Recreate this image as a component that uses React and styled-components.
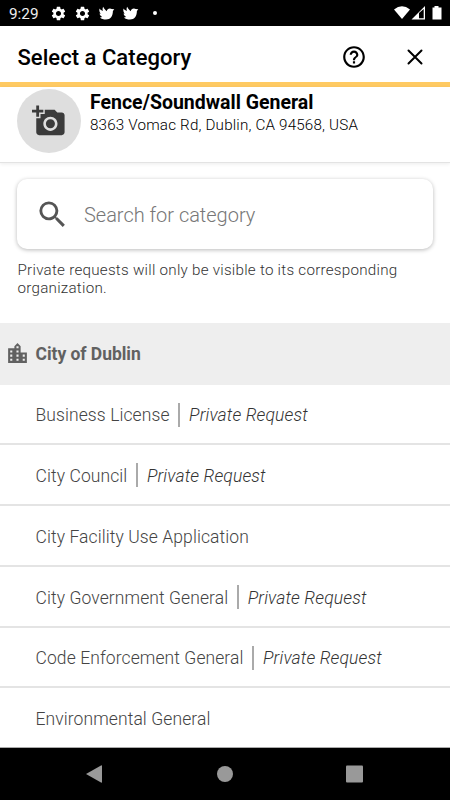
import React from "react";
import styled, { createGlobalStyle } from "styled-components";
import { MdSearch, MdHelpOutline, MdLocationCity, MdAddAPhoto, MdSettings } from "react-icons/md";

const Global = createGlobalStyle`
  * { box-sizing: border-box; }
  body { margin: 0; background: #fff; font-family: Roboto, "Liberation Sans", sans-serif; }
`;
const Screen = styled.div`
  width: 450px; height: 800px; overflow: hidden; background: #fff;
  display: flex; flex-direction: column;
`;
const StatusBar = styled.div`
  height: 26px; flex: none; background: #000; color: #fff;
  display: flex; align-items: center; padding: 0 8px 0 9px;
  svg { display: block; flex: none; }
`;
const Clock = styled.span`
  width: 41px; font-size: 15.3px; line-height: 18px; color: #eee; white-space: nowrap;
  padding-top: 1px;
`;
const Notifications = styled.div`
  display: flex; align-items: center; gap: 7px; flex: 1;
`;
const Dot = styled.i`
  width: 4px; height: 4px; border-radius: 50%; background: #fff; margin-left: 7px;
`;
const TopBar = styled.header`
  height: 61px; flex: none; display: flex; align-items: center;
  padding: 0 22px 0 17.5px; border-bottom: 5px solid #ffca62; color: #000;
`;
const Title = styled.h1`
  margin: 7px 0 0; flex: 1; font-size: 22px; line-height: 28px; font-weight: 500;
  letter-spacing: 0.04px; white-space: nowrap;
`;
const Actions = styled.div`
  display: flex; align-items: center; gap: 36px; margin-top: 6px;
  svg { display: block; }
`;
const Summary = styled.section`
  height: 75.5px; flex: none; display: flex; padding: 2px 18px 0 17px; gap: 9px;
  border-bottom: 1px solid #e3e3e3; box-shadow: 0 1px 4px rgba(0,0,0,.08);
`;
const Avatar = styled.div`
  width: 64px; height: 64px; border-radius: 50%; background: #dedede; color: #3b3b3b;
  display: flex; align-items: center; justify-content: center; flex: none;
  svg { margin-right: 1px; }
`;
const Line = styled.div`
  white-space: nowrap; font-size: ${(p) => p.$size}px; line-height: ${(p) => p.$lh}px;
  font-weight: ${(p) => p.$weight || 300}; letter-spacing: ${(p) => p.$track || 0}px;
  color: ${(p) => p.$color || "#000"};
`;
const SearchBox = styled.div`
  height: 70px; flex: none; margin: 16.5px 17px 0; border-radius: 10px; background: #fff;
  box-shadow: 0 1px 4px rgba(0,0,0,.28);
  display: flex; align-items: center; padding-left: 18px; gap: 14px; color: #555;
`;
const Placeholder = styled(Line)`
  padding-top: 2px;
`;
const Hint = styled.p`
  margin: 12px 18px 0 17.5px; height: 62px; flex: none; font-size: 15.2px; line-height: 18px;
  font-weight: 300; letter-spacing: 0.25px; color: #333;
`;
const GroupHeader = styled.div`
  height: 61.5px; flex: none; background: #eee; color: #616161;
  display: flex; align-items: center; padding-left: 5px; gap: 5.5px;
`;
const List = styled.div`
  flex: none; height: 363.5px; display: flex; flex-direction: column; border-bottom: 1px solid #aaa;
`;
const Row = styled.div`
  height: 60.8px; flex: none; display: flex; align-items: center; padding: 2.8px 0 0 35.5px;
  border-bottom: 2px solid #e4e4e4;
  &:last-child { border-bottom: 0; padding-top: 1px; }
`;
const Private = styled.span`
  border-left: 2px solid #aaa; height: 24px; margin: -1.6px 0 0 8.5px; padding: 1.6px 0 0 9px;
  display: flex; align-items: center; font-size: 17.5px; font-style: italic; font-weight: 300;
  letter-spacing: 0.13px; color: #333; white-space: nowrap;
`;
const NavBar = styled.nav`
  flex: 1; background: #000; display: flex; justify-content: center; gap: 112px; align-items: center;
  svg { display: block; }
`;

const Dove = () => (
  <svg width="17" height="16" viewBox="0 0 17 16" fill="#fff">
    <path d="M1.500 3.500C2.500 4.800 3.500 5.600 4.900 6 4.400 4.500 4.500 3 5.200 1.800 6.200 3.800 7.300 5.300 8.700 6.200 9.200 4.500 10.300 3.400 12 3.500 12.700 3.500 13.200 3.700 13.700 4.100L16.300 4.200 14.900 6C14.900 11 12.500 14.500 8 14.500 5.500 14.500 3.300 13.900 2 12.500L4.200 12C2.800 11.200 1.800 10 1.500 8.600L2.700 8.700C1.500 7.400 1 5.500 1.500 3.500Z" />
  </svg>
);

const categories = [
  ["Business License", true],
  ["City Council", true],
  ["City Facility Use Application", false],
  ["City Government General", true],
  ["Code Enforcement General", true],
  ["Environmental General", false],
];

export default function App() {
  return (
    <>
      <Global />
      <Screen>
        <StatusBar>
          <Clock>9:29</Clock>
          <Notifications>
            <MdSettings size={17} /><MdSettings size={17} /><Dove /><Dove /><Dot />
          </Notifications>
          <svg width="49" height="16" viewBox="0 0 49 16" fill="#fff">
            <path d="M1 4.400Q9 -1.800 17 4.400L9 14Z" />
            <path fillRule="evenodd" d="M18.500 14.500 32 1v13.500ZM26 8v5.300h4.700V4Z" />
            <path d="M41.500 1h4v1.500H48.500V14.500h-9V2.500h2Z" />
          </svg>
        </StatusBar>
        <TopBar>
          <Title>Select a Category</Title>
          <Actions>
            <MdHelpOutline size={26} />
            <svg width="25" height="24" viewBox="0 0 25 24" stroke="#000" strokeWidth="2" strokeLinecap="round">
              <path d="m5.500 5.500 13 13M18.500 5.500l-13 13" />
            </svg>
          </Actions>
        </TopBar>
        <Summary>
          <Avatar><MdAddAPhoto size={34} /></Avatar>
          <div>
            <Line $size={19.500} $lh={27} $weight={700}>Fence/Soundwall General</Line>
            <Line $size={15.200} $lh={19} $track={0.18}>8363 Vomac Rd, Dublin, CA 94568, USA</Line>
          </div>
        </Summary>
        <SearchBox>
          <MdSearch size={35} />
          <Placeholder $size={20} $lh={28} $track={-0.02} $color="#777">Search for category</Placeholder>
        </SearchBox>
        <Hint>Private requests will only be visible to its corresponding organization.</Hint>
        <GroupHeader>
          <MdLocationCity size={25} />
          <Line $size={17.500} $lh={24} $weight={700} $track={-0.04} $color="#616161">City of Dublin</Line>
        </GroupHeader>
        <List>
          {categories.map(([name, isPrivate]) => (
            <Row key={name}>
              <Line $size={17.500} $lh={24} $track={0.09} $color="#444">{name}</Line>
              {isPrivate && <Private>Private Request</Private>}
            </Row>
          ))}
        </List>
        <NavBar>
          <svg width="18" height="20" viewBox="0 0 18 20" fill="#999"><path d="M0 10 15 1.500Q16 1 16 2V18Q16 19 15 18.500Z" /></svg>
          <svg width="18" height="18" viewBox="0 0 18 18" fill="#999"><circle cx="9" cy="9" r="8" /></svg>
          <svg width="18" height="18" viewBox="0 0 18 18" fill="#999"><rect x="0" y="0.500" width="17" height="17" rx="1" /></svg>
        </NavBar>
      </Screen>
    </>
  );
}
